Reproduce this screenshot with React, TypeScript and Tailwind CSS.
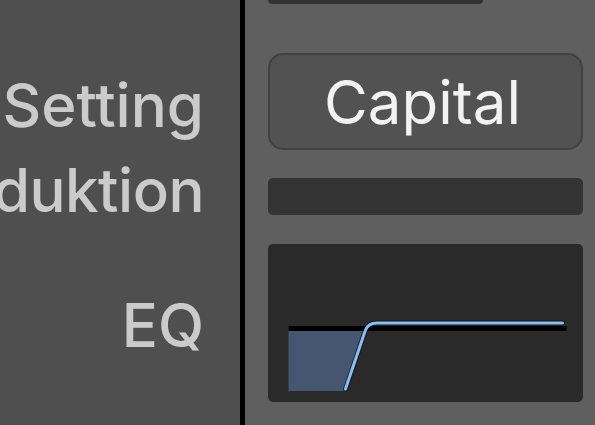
export default function App() {
  return (
    <div className="flex h-[425px] w-[595px] overflow-hidden bg-[#5f5f5f] font-['Inter','Liberation_Sans',sans-serif]">
      {/* label column */}
      <div className="flex w-[240px] shrink-0 flex-col items-end overflow-hidden bg-[#4f4f4f] pr-[36px] pt-[63px] text-[60px] leading-[85px] font-medium whitespace-nowrap text-[#cbcbcb]">
        <div>Setting</div>
        <div className="tracking-[-0.5px]">duktion</div>
        <div className="mt-[50px]">EQ</div>
      </div>

      <div className="w-[5px] shrink-0 bg-black" />

      {/* strip column */}
      <div className="flex flex-1 flex-col pl-[23px] pr-[12px]">
        <div className="h-[4px] w-[215px] rounded-b-[4px] bg-[#333333]" />

        <button
          type="button"
          className="mt-[49px] flex h-[97px] items-center justify-center rounded-[15px] border-2 border-[#414141] bg-[#525252] pr-[6px] text-[60px] leading-none text-[#f2f2f2]"
        >
          Capital
        </button>

        <div className="mt-[28px] h-[37px] rounded-[5px] bg-[#333333]" />

        <div className="mt-[29px] h-[158px] rounded-[5px] bg-[#2a2a2a]">
          <svg viewBox="0 0 314 158" className="h-full w-full">
            <path d="M20 86 H97 L77 147 H20 Z" fill="#475670" />
            <rect x="20" y="82" width="278" height="5" fill="#000000" />
            <path
              d="M77 145 L97 86 Q100 79 108 79 H294"
              fill="none"
              stroke="#000000"
              strokeWidth="5"
              strokeLinecap="round"
              opacity="0.5"
            />
            <path
              d="M77 145 L97 86 Q100 79 108 79 H294"
              fill="none"
              stroke="#86bff5"
              strokeWidth="3"
              strokeLinecap="round"
            />
          </svg>
        </div>
      </div>
    </div>
  );
}
